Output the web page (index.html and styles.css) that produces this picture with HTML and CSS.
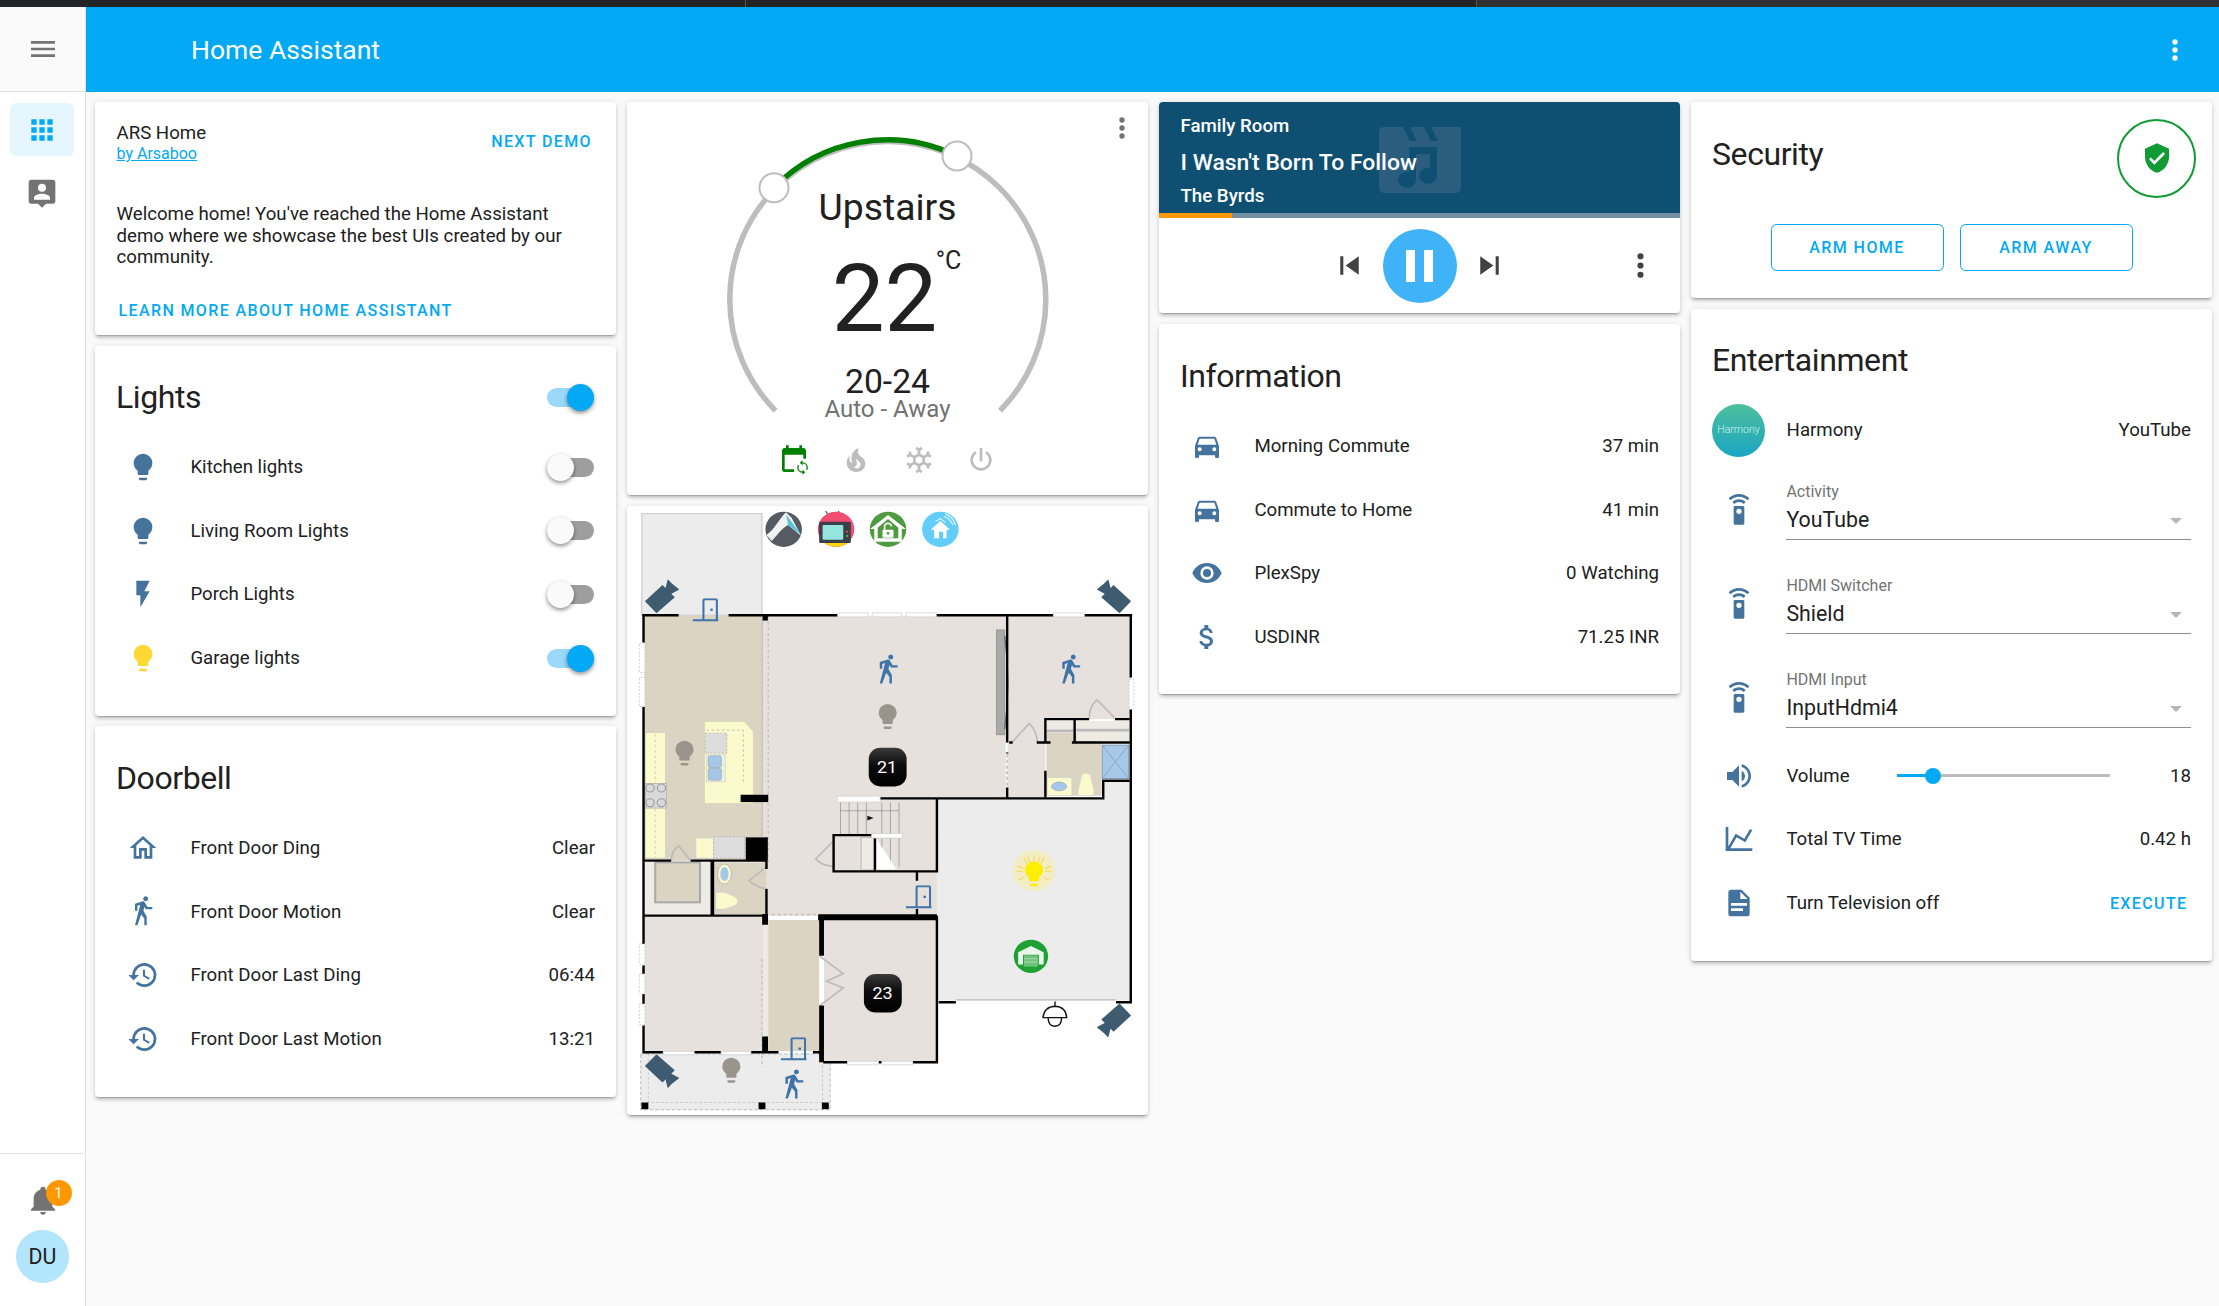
FILE: index.html
```html
<!DOCTYPE html>
<html lang="en">
<head>
<meta charset="utf-8">
<title>Home Assistant</title>
<link rel="stylesheet" href="styles.css">
</head>
<body>
<svg class="sprites" aria-hidden="true">
  <defs>
    <linearGradient id="nest-grad" x1="0" y1="0" x2="0" y2="1"><stop offset="0" stop-color="#3a3a3a"/><stop offset=".45" stop-color="#0c0c0c"/><stop offset="1" stop-color="#000"/></linearGradient>
  </defs>
  <symbol id="i-menu" viewBox="0 0 24 24"><path d="M3,6H21V8H3V6M3,11H21V13H3V11M3,16H21V18H3V16Z"/></symbol>
  <symbol id="i-apps" viewBox="0 0 24 24"><path d="M16,20H20V16H16M16,14H20V10H16M10,8H14V4H10M16,8H20V4H16M10,14H14V10H10M4,14H8V10H4M4,20H8V16H4M10,20H14V16H10M4,8H8V4H4V8Z"/></symbol>
  <symbol id="i-person" viewBox="0 0 24 24"><path fill-rule="evenodd" d="M4,2H20A2,2 0 0,1 22,4V18A2,2 0 0,1 20,20H15L12,23L9,20H4A2,2 0 0,1 2,18V4A2,2 0 0,1 4,2M12,5A3,3 0 0,0 9,8A3,3 0 0,0 12,11A3,3 0 0,0 15,8A3,3 0 0,0 12,5M6,17H18V15.5C18,13.5 14,12.5 12,12.5C10,12.5 6,13.5 6,15.5V17Z"/></symbol>
  <symbol id="i-dots" viewBox="0 0 24 24"><path d="M12,16A2,2 0 0,1 14,18A2,2 0 0,1 12,20A2,2 0 0,1 10,18A2,2 0 0,1 12,16M12,10A2,2 0 0,1 14,12A2,2 0 0,1 12,14A2,2 0 0,1 10,12A2,2 0 0,1 12,10M12,4A2,2 0 0,1 14,6A2,2 0 0,1 12,8A2,2 0 0,1 10,6A2,2 0 0,1 12,4Z"/></symbol>
  <symbol id="i-bell" viewBox="0 0 24 24"><path d="M21,19V20H3V19L5,17V11C5,7.9 7.03,5.17 10,4.29C10,4.19 10,4.1 10,4A2,2 0 0,1 12,2A2,2 0 0,1 14,4C14,4.1 14,4.19 14,4.29C16.97,5.17 19,7.9 19,11V17L21,19M14,21A2,2 0 0,1 12,23A2,2 0 0,1 10,21"/></symbol>
  <symbol id="i-bulb" viewBox="0 0 24 24"><path d="M12,2A7,7 0 0,0 5,9C5,11.38 6.19,13.47 8,14.74V17A1,1 0 0,0 9,18H15A1,1 0 0,0 16,17V14.74C17.81,13.47 19,11.38 19,9A7,7 0 0,0 12,2M9,21A1,1 0 0,0 10,22H14A1,1 0 0,0 15,21V20H9V21Z"/></symbol>
  <symbol id="i-flash" viewBox="0 0 24 24"><path d="M7,2V13H10V22L17,10H13L17,2H7Z"/></symbol>
  <symbol id="i-home" viewBox="0 0 24 24"><path d="M12 5.69L17 10.19V18H15V12H9V18H7V10.19L12 5.69M12 3L2 12H5V20H11V14H13V20H19V12H22L12 3Z"/></symbol>
  <symbol id="i-walk" viewBox="0 0 24 24"><path d="M14.12,10H19V8.2H15.38L13.38,4.87C13.08,4.37 12.54,4.03 11.92,4.03C11.74,4.03 11.58,4.06 11.42,4.11L6,5.8V11H7.8V7.33L9.91,6.67L6,22H7.8L10.67,13.89L13,17V22H14.8V15.59L12.31,11.05L13.04,8.18M14,3.8C15,3.8 15.8,3 15.8,2C15.8,1 15,0.2 14,0.2C13,0.2 12.2,1 12.2,2C12.2,3 13,3.8 14,3.8Z"/></symbol>
  <symbol id="i-history" viewBox="0 0 24 24"><path d="M13.5,8H12V13L16.28,15.54L17,14.33L13.5,12.25V8M13,3A9,9 0 0,0 4,12H1L4.96,16.03L9,12H6A7,7 0 0,1 13,5A7,7 0 0,1 20,12A7,7 0 0,1 13,19C11.07,19 9.32,18.21 8.06,16.94L6.64,18.36C8.27,20 10.5,21 13,21A9,9 0 0,0 22,12A9,9 0 0,0 13,3"/></symbol>
  <symbol id="i-car" viewBox="0 0 24 24"><path d="M5,11L6.5,6.5H17.5L19,11M17.5,16A1.5,1.5 0 0,1 16,14.5A1.5,1.5 0 0,1 17.5,13A1.5,1.5 0 0,1 19,14.5A1.5,1.5 0 0,1 17.5,16M6.5,16A1.5,1.5 0 0,1 5,14.5A1.5,1.5 0 0,1 6.5,13A1.5,1.5 0 0,1 8,14.5A1.5,1.5 0 0,1 6.5,16M18.92,6C18.72,5.42 18.16,5 17.5,5H6.5C5.84,5 5.28,5.42 5.08,6L3,12V20A1,1 0 0,0 4,21H5A1,1 0 0,0 6,20V19H18V20A1,1 0 0,0 19,21H20A1,1 0 0,0 21,20V12L18.92,6Z"/></symbol>
  <symbol id="i-eye" viewBox="0 0 24 24"><path d="M12,9A3,3 0 0,0 9,12A3,3 0 0,0 12,15A3,3 0 0,0 15,12A3,3 0 0,0 12,9M12,17A5,5 0 0,1 7,12A5,5 0 0,1 12,7A5,5 0 0,1 17,12A5,5 0 0,1 12,17M12,4.5C7,4.5 2.73,7.61 1,12C2.73,16.39 7,19.5 12,19.5C17,19.5 21.27,16.39 23,12C21.27,7.61 17,4.5 12,4.5Z"/></symbol>
  <symbol id="i-usd" viewBox="0 0 24 24"><path d="M11.8,10.9C9.53,10.31 8.8,9.7 8.8,8.75C8.8,7.66 9.81,6.9 11.5,6.9C13.28,6.9 13.94,7.75 14,9H16.21C16.14,7.28 15.09,5.7 13,5.19V3H10V5.16C8.06,5.58 6.5,6.84 6.5,8.77C6.5,11.08 8.41,12.23 11.2,12.9C13.7,13.5 14.2,14.38 14.2,15.31C14.2,16 13.71,17.1 11.5,17.1C9.44,17.1 8.63,16.18 8.5,15H6.32C6.44,17.19 8.08,18.42 10,18.83V21H13V18.85C14.95,18.5 16.5,17.35 16.5,15.3C16.5,12.46 14.07,11.5 11.8,10.9Z"/></symbol>
  <symbol id="i-remote" viewBox="0 0 24 24"><path d="M12,0C8.96,0 6.21,1.23 4.22,3.22L5.63,4.63C7.26,3 9.5,2 12,2C14.5,2 16.74,3 18.36,4.64L19.77,3.23C17.79,1.23 15.04,0 12,0M7.05,6.05L8.46,7.46C9.37,6.56 10.62,6 12,6C13.38,6 14.63,6.56 15.54,7.46L16.95,6.05C15.68,4.78 13.93,4 12,4C10.07,4 8.32,4.78 7.05,6.05M12,15A2,2 0 0,1 10,13A2,2 0 0,1 12,11A2,2 0 0,1 14,13A2,2 0 0,1 12,15M15,9H9A1,1 0 0,0 8,10V22A1,1 0 0,0 9,23H15A1,1 0 0,0 16,22V10A1,1 0 0,0 15,9Z"/></symbol>
  <symbol id="i-volume" viewBox="0 0 24 24"><path d="M14,3.23V5.29C16.89,6.15 19,8.83 19,12C19,15.17 16.89,17.84 14,18.7V20.77C18,19.86 21,16.28 21,12C21,7.72 18,4.14 14,3.23M16.5,12C16.5,10.23 15.5,8.71 14,7.97V16C15.5,15.29 16.5,13.76 16.5,12M3,9V15H7L12,20V4L7,9H3Z"/></symbol>
  <symbol id="i-chart" viewBox="0 0 24 24"><path d="M16,11.78L20.24,4.45L21.97,5.45L16.74,14.5L10.23,10.75L5.46,19H22V21H2V3H4V17.54L9.5,8L16,11.78Z"/></symbol>
  <symbol id="i-file" viewBox="0 0 24 24"><path d="M13,9H18.5L13,3.5V9M6,2H14L20,8V20A2,2 0 0,1 18,22H6C4.89,22 4,21.1 4,20V4C4,2.89 4.89,2 6,2M15,18V16H6V18H15M18,14V12H6V14H18Z"/></symbol>
  <symbol id="i-shield" viewBox="0 0 24 24"><path d="M10,17L6,13L7.41,11.59L10,14.17L16.59,7.58L18,9M12,1L3,5V11C3,16.55 6.84,21.74 12,23C17.16,21.74 21,16.55 21,11V5L12,1Z"/></symbol>
  <symbol id="i-prev" viewBox="0 0 24 24"><path d="M6,18V6H8V18H6M9.5,12L18,6V18L9.5,12Z"/></symbol>
  <symbol id="i-next" viewBox="0 0 24 24"><path d="M16,18H18V6H16M6,18L14.5,12L6,6V18Z"/></symbol>
  <symbol id="i-power" viewBox="0 0 24 24"><path d="M16.56,5.44L15.11,6.89C16.84,7.94 18,9.83 18,12A6,6 0 0,1 12,18A6,6 0 0,1 6,12C6,9.83 7.16,7.94 8.88,6.88L7.44,5.44C5.36,6.88 4,9.28 4,12A8,8 0 0,0 12,20A8,8 0 0,0 20,12C20,9.28 18.64,6.88 16.56,5.44M13,3H11V13H13"/></symbol>
  <symbol id="i-fire" viewBox="0 0 24 24"><path d="M17.66 11.2C17.43 10.9 17.15 10.64 16.89 10.38C16.22 9.78 15.46 9.35 14.82 8.72C13.33 7.26 13 4.85 13.95 3C13 3.23 12.17 3.75 11.46 4.32C8.87 6.4 7.85 10.07 9.07 13.22C9.11 13.32 9.15 13.42 9.15 13.55C9.15 13.77 9 13.97 8.8 14.05C8.57 14.15 8.33 14.09 8.14 13.93C8.08 13.88 8.04 13.83 8 13.76C6.87 12.33 6.69 10.28 7.45 8.64C5.78 10 4.87 12.3 5 14.47C5.06 14.97 5.12 15.47 5.29 15.97C5.43 16.57 5.7 17.17 6 17.7C7.08 19.43 8.95 20.67 10.96 20.92C13.1 21.19 15.39 20.8 17.03 19.32C18.86 17.66 19.5 15 18.56 12.72L18.43 12.46C18.22 12 17.66 11.2 17.66 11.2M14.5 17.5C14.22 17.74 13.76 18 13.4 18.1C12.28 18.5 11.16 17.94 10.5 17.28C11.69 17 12.4 16.12 12.61 15.23C12.78 14.43 12.46 13.77 12.33 13C12.21 12.26 12.23 11.63 12.5 10.94C12.69 11.32 12.89 11.7 13.13 12C13.9 13 15.11 13.44 15.37 14.8C15.41 14.94 15.43 15.08 15.43 15.23C15.46 16.05 15.1 16.95 14.5 17.5H14.5Z"/></symbol>
  <symbol id="i-snow" viewBox="0 0 24 24"><path d="M20.79,13.95L18.46,14.57L16.46,13.44V10.56L18.46,9.43L20.79,10.05L21.31,8.12L19.54,7.65L20,5.88L18.07,5.36L17.45,7.69L15.45,8.82L13,7.38V5.12L14.71,3.41L13.29,2L12,3.29L10.71,2L9.29,3.41L11,5.12V7.38L8.5,8.82L6.5,7.69L5.92,5.36L4,5.88L4.47,7.65L2.7,8.12L3.22,10.05L5.55,9.43L7.55,10.56V13.45L5.55,14.58L3.22,13.96L2.7,15.89L4.47,16.36L4,18.12L5.93,18.64L6.55,16.31L8.55,15.18L11,16.62V18.88L9.29,20.59L10.71,22L12,20.71L13.29,22L14.7,20.59L13,18.88V16.62L15.5,15.17L17.5,16.3L18.12,18.63L20.05,18.11L19.58,16.34L21.35,15.87L20.79,13.95M9.5,10.56L12,9.11L14.5,10.56V13.44L12,14.89L9.5,13.44V10.56Z"/></symbol>
  <symbol id="i-calsync" viewBox="0 0 24 24"><path d="M19,3H18V1H16V3H8V1H6V3H5C3.9,3 3,3.9 3,5V19A2,2 0 0,0 5,21H12V19H5V8H19V11H21V5C21,3.9 20.1,3 19,3Z"/><path transform="translate(12.4 11.6) scale(.5)" d="M12,18A6,6 0 0,1 6,12C6,11 6.25,10.03 6.7,9.2L5.24,7.74C4.46,8.97 4,10.43 4,12A8,8 0 0,0 12,20V23L16,19L12,15M12,4V1L8,5L12,9V6A6,6 0 0,1 18,12C18,13 17.75,13.97 17.3,14.8L18.76,16.26C19.54,15.03 20,13.57 20,12A8,8 0 0,0 12,4Z"/></symbol>
  <symbol id="i-camera" viewBox="0 0 100 100"><path d="M2,65L52,17L87,53L35,100Z"/><path d="M60,28L67,0L78,12L100,30L75,44Z"/></symbol>
  <symbol id="i-door" viewBox="0 0 80 72"><path fill="none" stroke="currentColor" stroke-width="6" d="M2,66H76M33,64V6Q33,3 36,3H69Q72,3 72,6V64"/><rect x="53" y="31" width="7" height="7"/></symbol>
</svg>

<div class="topstrip"><span class="seg-a"></span><span class="seg-b"></span><span class="seg-c"></span></div>
<div class="app">
  <aside class="sidebar">
    <div class="side-head"><svg class="ico side-ico"><use href="#i-menu"/></svg></div>
    <nav class="side-nav">
      <div class="side-item active"><svg class="ico blue-ico"><use href="#i-apps"/></svg></div>
      <div class="side-item"><svg class="ico side-ico"><use href="#i-person"/></svg></div>
    </nav>
    <div class="side-foot">
      <div class="bell-wrap"><svg class="ico side-ico"><use href="#i-bell"/></svg><span class="badge">1</span></div>
      <div class="avatar">DU</div>
    </div>
  </aside>

  <div class="main">
    <header class="topbar">
      <div class="topbar-title">Home Assistant</div>
      <svg class="ico white-ico"><use href="#i-dots"/></svg>
    </header>

    <div class="columns">
      <div class="column">
        <section class="card demo">
          <div class="demo-head">
            <div>
              <div class="demo-name">ARS Home</div>
              <a class="demo-by">by Arsaboo</a>
            </div>
            <span class="btn-text next-demo">NEXT DEMO</span>
          </div>
          <p class="demo-copy">Welcome home! You've reached the Home Assistant demo where we showcase the best UIs created by our community.</p>
          <div class="btn-text learn">LEARN MORE ABOUT HOME ASSISTANT</div>
        </section>

        <section class="card entities">
          <div class="card-head"><h2>Lights</h2><span class="toggle on"></span></div>
          <div class="row"><svg class="ico state"><use href="#i-bulb"/></svg><span class="name">Kitchen lights</span><span class="toggle"></span></div>
          <div class="row"><svg class="ico state"><use href="#i-bulb"/></svg><span class="name">Living Room Lights</span><span class="toggle"></span></div>
          <div class="row"><svg class="ico state"><use href="#i-flash"/></svg><span class="name">Porch Lights</span><span class="toggle"></span></div>
          <div class="row"><svg class="ico state lit"><use href="#i-bulb"/></svg><span class="name">Garage lights</span><span class="toggle on"></span></div>
        </section>

        <section class="card entities">
          <div class="card-head"><h2>Doorbell</h2></div>
          <div class="row"><svg class="ico state"><use href="#i-home"/></svg><span class="name">Front Door Ding</span><span class="value">Clear</span></div>
          <div class="row"><svg class="ico state"><use href="#i-walk"/></svg><span class="name">Front Door Motion</span><span class="value">Clear</span></div>
          <div class="row"><svg class="ico state"><use href="#i-history"/></svg><span class="name">Front Door Last Ding</span><span class="value">06:44</span></div>
          <div class="row"><svg class="ico state"><use href="#i-history"/></svg><span class="name">Front Door Last Motion</span><span class="value">13:21</span></div>
        </section>
      </div>

      <div class="column">
        <section class="card thermostat">
          <svg class="ico thermo-more"><use href="#i-dots"/></svg>
          <svg class="dial" viewBox="0 0 521 393">
            <path class="dial-track" d="M148.6,308.7 A158,158 0 1,1 373,308.7"/>
            <path class="dial-active" d="M147,85.7 A158,158 0 0,1 330,54"/>
            <circle class="dial-handle" cx="147" cy="85.7" r="14.5"/>
            <circle class="dial-handle" cx="330" cy="54" r="14.5"/>
          </svg>
          <div class="thermo-text">
            <div class="thermo-name">Upstairs</div>
            <div class="thermo-temp">22<span class="thermo-unit">°C</span></div>
            <div class="thermo-range">20-24</div>
            <div class="thermo-mode">Auto - Away</div>
          </div>
          <div class="thermo-modes">
            <svg class="ico mode-on"><use href="#i-calsync"/></svg>
            <svg class="ico mode-off"><use href="#i-fire"/></svg>
            <svg class="ico mode-off"><use href="#i-snow"/></svg>
            <svg class="ico mode-off"><use href="#i-power"/></svg>
          </div>
        </section>

        <section class="card plan">
          <svg class="plan-svg" viewBox="20 15 1513 1830" preserveAspectRatio="none">
            <!-- yards & rooms -->
            <rect x="63" y="38" width="349" height="305" fill="#ececec" stroke="#c8c8c8" stroke-width="3"/>
            <rect x="920" y="895" width="562" height="605" fill="#ececec"/>
            <rect x="1400" y="840" width="80" height="60" fill="#ececec"/>
            <rect x="60" y="1660" width="550" height="168" fill="#ececec" stroke="#bbb" stroke-width="3" stroke-dasharray="10 6"/>
            <path d="M82,1660V1806H588V1660" fill="none" stroke="#c4c4c4" stroke-width="2.5" stroke-dasharray="8 6"/>
            <rect x="70" y="345" width="345" height="735" fill="#dcd4c3"/>
            <rect x="415" y="345" width="705" height="550" fill="#e6e1dc"/>
            <rect x="415" y="895" width="505" height="350" fill="#e6e1dc"/>
            <rect x="1125" y="345" width="358" height="310" fill="#e6e1dc"/>
            <rect x="1125" y="650" width="110" height="245" fill="#e6e1dc"/>
            <rect x="70" y="1248" width="345" height="404" fill="#e6e1dc"/>
            <rect x="415" y="1248" width="15" height="404" fill="#ede9e4"/>
            <rect x="430" y="1258" width="148" height="394" fill="#dcd4c3"/>
            <rect x="592" y="1258" width="328" height="424" fill="#e6e1dc"/>
            <rect x="275" y="1085" width="150" height="155" fill="#dcd4c3"/>
            <rect x="72" y="1085" width="192" height="155" fill="#eeeae4"/>
            <rect x="102" y="1085" width="130" height="120" fill="#dcd4c3" stroke="#aaa" stroke-width="6"/>
            <rect x="1238" y="695" width="160" height="190" fill="#dcd4c3"/>
            <rect x="1238" y="660" width="80" height="35" fill="#eeeae4"/>
            <rect x="1325" y="660" width="155" height="60" fill="#eeeae4"/>
            <path d="M1238,690H1316M1325,688H1478" stroke="#bbb" stroke-width="8" fill="none"/>
            <path d="M413,345V1085" stroke="#c9c4ba" stroke-width="4"/>
            <path d="M430,345V1085M412,1375V1700" stroke="#bdb8b2" stroke-width="3" stroke-dasharray="9 8" fill="none"/>
            <!-- fixtures -->
            <rect x="73" y="695" width="59" height="377" fill="#fafacd" stroke="#ccc" stroke-width="2"/>
            <path d="M102,700V1070" stroke="#bbb" stroke-width="2" stroke-dasharray="8 8"/>
            <rect x="73" y="848" width="62" height="74" fill="#d9d9d9" stroke="#aaa" stroke-width="2"/>
            <g fill="none" stroke="#999" stroke-width="3"><circle cx="87" cy="862" r="12"/><circle cx="120" cy="862" r="12"/><circle cx="87" cy="906" r="12"/><circle cx="120" cy="906" r="12"/></g>
            <path d="M245,662H360L387,692V908H245Z" fill="#fafacd" stroke="#d4d4b0" stroke-width="2"/>
            <path d="M250,688H358V850" fill="none" stroke="#bbb" stroke-width="2.5" stroke-dasharray="8 7"/>
            <rect x="247" y="697" width="63" height="60" fill="#ddd" stroke="#aaa" stroke-width="2" stroke-dasharray="6 5"/>
            <rect x="250" y="760" width="55" height="83" fill="#f0f0dc" stroke="#ccc" stroke-width="2"/>
            <rect x="256" y="765" width="38" height="35" rx="5" fill="#a5c8e8" stroke="#8fa6b8" stroke-width="2"/>
            <rect x="256" y="803" width="38" height="35" rx="5" fill="#a5c8e8" stroke="#8fa6b8" stroke-width="2"/>
            <rect x="220" y="1012" width="52" height="60" fill="#fafacd" stroke="#ccc" stroke-width="2"/>
            <rect x="272" y="1008" width="90" height="64" fill="#ddd" stroke="#aaa" stroke-width="2" stroke-dasharray="6 5"/>
            <rect x="365" y="1010" width="63" height="68" fill="#000"/>
            <rect x="350" y="882" width="80" height="22" fill="#000"/>
            <rect x="1093" y="387" width="24" height="315" fill="#aaa" stroke="#888" stroke-width="2"/>
            <path d="M1117,405Q1135,545 1117,685" fill="none" stroke="#666" stroke-width="4"/>
            <rect x="1400" y="733" width="77" height="100" fill="#a8c8e8" stroke="#7c9ab4" stroke-width="3"/>
            <path d="M1400,733L1477,833M1477,733L1400,833" stroke="#7c9ab4" stroke-width="2"/>
            <rect x="1240" y="830" width="72" height="55" fill="#fafacd" stroke="#ccc" stroke-width="2"/>
            <ellipse cx="1275" cy="857" rx="22" ry="13" fill="#a5c8e8" stroke="#8fa6b8" stroke-width="2"/>
            <path d="M1330,885C1328,860 1336,852 1338,832C1340,812 1366,812 1368,832C1370,852 1378,860 1376,885Z" fill="#fafacd" stroke="#ccc" stroke-width="2"/>
            <ellipse cx="303" cy="1120" rx="20" ry="30" fill="#fafacd" stroke="#aaa" stroke-width="2"/>
            <ellipse cx="303" cy="1120" rx="12" ry="21" fill="#a5c8e8"/>
            <path d="M278,1175H300C320,1182 342,1188 342,1202C342,1216 320,1220 300,1226H278Z" fill="#fafacd" stroke="#ccc" stroke-width="2"/>
            <!-- stairs -->
            <path d="M640,905V1000M665,905V1000M690,905V1000M715,905V1000M760,905V1100M785,905V1100M810,905V1100M640,930H810" stroke="#888" stroke-width="2" fill="none"/>
            <path d="M718,945L736,952L718,959Z" fill="#111"/>
            <rect x="700" y="1010" width="38" height="98" fill="#eeeae4" stroke="#bbb" stroke-width="3"/>
            <path d="M745,1015L802,1106H745Z" fill="#fff"/>
            <!-- door swings -->
            <g fill="none" stroke="#bbb" stroke-width="5">
              <path d="M1138,725L1188,668Q1210,690 1212,725"/>
              <path d="M1362,650Q1364,615 1385,597L1435,650"/>
              <path d="M148,1080Q150,1050 170,1035L205,1080"/>
              <path d="M428,1095L375,1140Q395,1160 428,1165"/>
              <path d="M620,1020L568,1075Q585,1095 620,1097"/>
              <path d="M580,1367L648,1419L600,1442L648,1462L580,1515"/>
            </g>
            <!-- walls -->
            <g fill="none" stroke="#000" stroke-width="7">
              <path d="M65,343H170M315,343H632M918,343H1258M1348,343H1487"/>
              <path d="M1483,340V530M1483,625V1508"/>
              <path d="M68,340V425M68,618V1330M68,1395V1420M68,1480V1510M68,1575V1658"/>
              <path d="M1124,345V725M1124,755V758M1124,860V892"/>
              <path d="M755,893H1403V840H1480"/>
              <path d="M920,893V1112H620V1003H735"/>
              <path d="M740,1008V1110"/>
              <path d="M862,1112V1140M862,1225V1245"/>
              <path d="M920,1245V1685H850M760,1685H750M660,1685H590"/>
              <path d="M68,1245H425"/>
              <path d="M68,1080H148M205,1080H425"/>
              <path d="M425,1010V1105M425,1165V1245"/>
              <path d="M68,1655H125M215,1655H293M380,1655H460M560,1655H592"/>
              <path d="M1235,890V810M1235,725V655H1362M1437,655H1480"/>
              <path d="M1320,655V725M1312,725H1480M1130,725H1140M1210,725H1250"/>
              <path d="M925,1505H975M1440,1505H1485"/>
            </g>
            <path d="M268,1080V1245" stroke="#000" stroke-width="11"/>
            <path d="M575,1250H920" stroke="#000" stroke-width="18"/>
            <path d="M585,1250V1365M585,1515V1685" stroke="#000" stroke-width="14"/>
            <path d="M421,1240V1272M421,1608V1655" stroke="#000" stroke-width="17"/>
            <rect x="414" y="345" width="15" height="14" fill="#000"/>
            <path d="M975,1498H1440" stroke="#bbb" stroke-width="4"/>
            <!-- windows -->
            <g fill="#fff" stroke="#c8c8c8" stroke-width="2">
              <rect x="632" y="336" width="88" height="12"/><rect x="732" y="336" width="86" height="12"/><rect x="830" y="336" width="88" height="12"/><rect x="1258" y="336" width="90" height="12"/>
              <rect x="125" y="1652" width="90" height="11"/><rect x="293" y="1652" width="87" height="11"/><rect x="660" y="1682" width="90" height="11"/><rect x="760" y="1682" width="90" height="11"/>
              <rect x="730" y="998" width="90" height="14"/><rect x="630" y="886" width="125" height="18"/>
            </g>
            <g fill="#fff" stroke="#bbb" stroke-width="2" stroke-dasharray="6 5">
              <rect x="56" y="428" width="16" height="87"/><rect x="56" y="530" width="16" height="87"/>
              <rect x="1478" y="535" width="14" height="90"/>
              <rect x="56" y="1330" width="16" height="62"/><rect x="56" y="1420" width="16" height="60"/><rect x="56" y="1510" width="16" height="62"/>
            </g>
            <path d="M1124,760V860M440,1242H568" stroke="#c9c4ba" stroke-width="5" stroke-dasharray="10 7" fill="none"/>
            <rect x="62" y="1806" width="20" height="20" fill="#000"/><rect x="402" y="1806" width="20" height="20" fill="#000"/><rect x="586" y="1806" width="20" height="20" fill="#000"/>
            <!-- door icons -->
            <g class="plan-blue">
              <use href="#i-door" x="209" y="292" width="80" height="72"/>
              <use href="#i-door" x="828" y="1154" width="80" height="72"/>
              <use href="#i-door" x="465" y="1610" width="80" height="72"/>
              <use href="#i-walk" x="730" y="460" width="96" height="96"/>
              <use href="#i-walk" x="1260" y="460" width="96" height="96"/>
              <use href="#i-walk" x="456" y="1706" width="96" height="96"/>
            </g>
            <!-- cameras -->
            <g fill="#3f5b70">
              <use href="#i-camera" x="70" y="235" width="102" height="102"/>
              <use href="#i-camera" transform="translate(2870 0) scale(-1 1)" x="1384" y="235" width="102" height="102"/>
              <use href="#i-camera" transform="translate(2870 3120) scale(-1 -1)" x="1384" y="1509" width="102" height="102"/>
              <use href="#i-camera" transform="translate(0 3424) scale(1 -1)" x="70" y="1661" width="102" height="102"/>
            </g>
            <!-- bulbs -->
            <g fill="#9a948c">
              <use href="#i-bulb" x="722" y="602" width="110" height="90"/>
              <use href="#i-bulb" x="132" y="712" width="110" height="90"/>
              <use href="#i-bulb" x="268" y="1664" width="110" height="90"/>
            </g>
            <circle cx="1202" cy="1110" r="62" fill="#fff27a" opacity=".35"/>
            <g stroke="#f7d84a" stroke-width="3">
              <path d="M1202,1064V1082M1172,1072L1182,1088M1232,1072L1222,1088M1154,1096L1170,1104M1250,1096L1234,1104M1152,1112H1170M1252,1112H1234M1158,1138L1172,1130M1246,1138L1232,1130M1220,1068L1214,1084M1184,1068L1190,1084"/>
            </g>
            <use href="#i-bulb" x="1152" y="1074" width="100" height="90" fill="#ffee00"/>
            <!-- nest -->
            <rect x="722" y="741" width="110" height="116" rx="34" fill="url(#nest-grad)"/>
            <text class="plan-temp" x="775" y="818">21</text>
            <rect x="708" y="1420" width="110" height="116" rx="34" fill="url(#nest-grad)"/>
            <text class="plan-temp" x="762" y="1495">23</text>
            <!-- garage -->
            <circle cx="1193" cy="1367" r="50" fill="#1fa136"/>
            <path d="M1156,1355L1193,1336L1230,1355V1392H1216V1362H1170V1392H1156Z" fill="#e9f6ea"/>
            <rect x="1173" y="1364" width="40" height="34" fill="#6fc27d"/>
            <path d="M1173,1374H1213M1173,1384H1213" stroke="#a9dcb1" stroke-width="3"/>
            <!-- dome -->
            <path d="M1263,1503V1516M1228,1551Q1232,1518 1263,1517Q1294,1518 1297,1551ZM1243,1553Q1244,1576 1262,1577Q1282,1576 1282,1553" fill="#fff" stroke="#111" stroke-width="4"/>
            <!-- device badges -->
            <circle cx="475" cy="85" r="53" fill="#565a62"/>
            <path d="M425,102C450,85 460,55 482,34L498,50L526,105L488,72C470,80 455,105 440,120Z" fill="#f2f2f2"/>
            <path d="M482,40L526,102L488,72Z" fill="#58c3d9"/>
            <path d="M597,30L615,62L636,30" fill="none" stroke="#333" stroke-width="3"/>
            <circle cx="627" cy="85" r="53" fill="#f34d70"/>
            <path d="M590,122H664A53,53 0 0,1 590,122Z" fill="#ffd600"/>
            <rect x="578" y="62" width="92" height="64" rx="4" fill="#3a3f4a"/>
            <rect x="588" y="72" width="60" height="44" rx="3" fill="#94e5de"/>
            <circle cx="659" cy="92" r="3" fill="#e53"/><circle cx="659" cy="105" r="3" fill="#5c5"/>
            <circle cx="778" cy="85" r="53" fill="#4e9b40"/>
            <path d="M778,42L830,84H818V122H738V84H726Z" fill="#fff"/>
            <path d="M778,54L808,80V112H748V80Z" fill="#4e9b40"/>
            <rect x="762" y="86" width="32" height="24" rx="3" fill="#fff"/>
            <path d="M768,86V78A10,10 0 0,1 788,76" fill="none" stroke="#fff" stroke-width="5"/>
            <circle cx="778" cy="97" r="4" fill="#4e9b40"/>
            <circle cx="930" cy="85" r="53" fill="#62cdfb"/>
            <path d="M930,60L902,86H912V112H926V92H938V112H948V86H958Z" fill="#fff"/>
            <path d="M916,62L930,52L944,64M940,46Q958,52 966,72M944,38Q966,46 974,72" fill="none" stroke="#eafaff" stroke-width="3"/>
          </svg>
        </section>
      </div>

      <div class="column">
        <section class="card media">
          <div class="media-top">
            <svg class="media-art" viewBox="0 0 82 66"><path fill-rule="evenodd" d="M0,5Q0,0 5,0H24L31,14H38L31,0H45L52,14H59L52,0H82V60Q82,66 76,66H6Q0,66 0,60ZM30,20H58V48A9,8 0 1,1 51,41V27H37V52A9,8 0 1,1 30,45Z"/></svg>
            <div class="media-room">Family Room</div>
            <div class="media-track">I Wasn't Born To Follow</div>
            <div class="media-artist">The Byrds</div>
          </div>
          <div class="media-progress"><span class="media-progress-fill"></span></div>
          <div class="media-ctrl">
            <svg class="ico dark-ico"><use href="#i-prev"/></svg>
            <div class="pause"><span></span><span></span></div>
            <svg class="ico dark-ico"><use href="#i-next"/></svg>
            <svg class="ico dark-ico media-more"><use href="#i-dots"/></svg>
          </div>
        </section>

        <section class="card entities info">
          <div class="card-head"><h2>Information</h2></div>
          <div class="row"><svg class="ico state"><use href="#i-car"/></svg><span class="name">Morning Commute</span><span class="value">37 min</span></div>
          <div class="row"><svg class="ico state"><use href="#i-car"/></svg><span class="name">Commute to Home</span><span class="value">41 min</span></div>
          <div class="row"><svg class="ico state"><use href="#i-eye"/></svg><span class="name">PlexSpy</span><span class="value">0 Watching</span></div>
          <div class="row"><svg class="ico state"><use href="#i-usd"/></svg><span class="name">USDINR</span><span class="value">71.25 INR</span></div>
        </section>
      </div>

      <div class="column">
        <section class="card security">
          <div class="security-head">
            <h2>Security</h2>
            <div class="alarm"><svg class="ico alarm-ico"><use href="#i-shield"/></svg></div>
          </div>
          <div class="security-btns">
            <span class="btn-outline">ARM HOME</span>
            <span class="btn-outline">ARM AWAY</span>
          </div>
        </section>

        <section class="card entities">
          <div class="card-head"><h2>Entertainment</h2></div>
          <div class="row"><span class="harmony"><span>Harmony</span></span><span class="name">Harmony</span><span class="value">YouTube</span></div>
          <div class="select-row"><svg class="ico state"><use href="#i-remote"/></svg>
            <div class="select"><div class="select-label">Activity</div><div class="select-value">YouTube</div><span class="caret"></span></div></div>
          <div class="select-row"><svg class="ico state"><use href="#i-remote"/></svg>
            <div class="select"><div class="select-label">HDMI Switcher</div><div class="select-value">Shield</div><span class="caret"></span></div></div>
          <div class="select-row"><svg class="ico state"><use href="#i-remote"/></svg>
            <div class="select"><div class="select-label">HDMI Input</div><div class="select-value">InputHdmi4</div><span class="caret"></span></div></div>
          <div class="row"><svg class="ico state"><use href="#i-volume"/></svg><span class="name vol-name">Volume</span>
            <span class="slider"><span class="slider-fill"></span><span class="slider-knob"></span></span><span class="value">18</span></div>
          <div class="row"><svg class="ico state"><use href="#i-chart"/></svg><span class="name">Total TV Time</span><span class="value">0.42 h</span></div>
          <div class="row"><svg class="ico state"><use href="#i-file"/></svg><span class="name">Turn Television off</span><span class="btn-text execute">EXECUTE</span></div>
        </section>
      </div>
    </div>
  </div>
</div>
</body>
</html>
```
FILE: styles.css
```css
* { box-sizing: border-box; }
html, body { margin: 0; height: 100%; overflow: hidden; }
body { font-family: Roboto, "Liberation Sans", sans-serif; color: #212121; background: #fafafa; display: flex; flex-direction: column; }
.sprites { width: 0; height: 0; position: absolute; }
.ico { width: 32px; height: 32px; fill: currentColor; flex: none; display: block; }

.topstrip { height: 7px; display: flex; background: #222426; flex: none; }
.seg-a { width: 745px; }
.seg-b { width: 731px; border-left: 1px solid #555; }
.seg-c { flex: 1; background: #2f3133; border-left: 1px solid #555; }

.app { flex: 1; display: flex; min-height: 0; }

.sidebar { width: 86px; flex: none; background: #fff; border-right: 1px solid #e2e2e2; display: flex; flex-direction: column; }
.side-ico { color: #737373; }
.blue-ico { color: #03a9f4; }
.white-ico { color: #fff; }
.side-head { height: 85px; flex: none; display: flex; align-items: center; justify-content: center; background: #fafafa; border-bottom: 1px solid #e2e2e2; }
.side-nav { flex: 1; padding: 11px 11px 0 10px; display: flex; flex-direction: column; gap: 10px; }
.side-item { height: 53px; border-radius: 6px; display: flex; align-items: center; justify-content: center; }
.side-item.active { background: #e6f6fe; }
.side-foot { height: 153px; flex: none; border-top: 1px solid #e2e2e2; display: flex; flex-direction: column; align-items: center; padding-top: 30px; gap: 14px; }
.bell-wrap { position: relative; }
.badge { position: absolute; left: 19px; top: -4px; width: 26px; height: 26px; border-radius: 50%; background: #ff9800; color: #fff; font-size: 14px; display: flex; align-items: center; justify-content: center; }
.avatar { width: 53px; height: 53px; border-radius: 50%; background: #b3e5fc; display: flex; align-items: center; justify-content: center; font-size: 21.33px; }

.main { flex: 1; min-width: 0; display: flex; flex-direction: column; }
.topbar { height: 85px; flex: none; background: #03a9f4; color: #fff; display: flex; align-items: center; justify-content: space-between; padding: 0 28px 0 105px; }
.topbar-title { font-size: 26.5px; }

.columns { flex: 1; display: flex; gap: 11px; padding: 10px 7px 0 9px; align-items: flex-start; }
.column { width: 521px; flex: none; display: flex; flex-direction: column; gap: 10.5px; }

.card { background: #fff; border-radius: 4px; box-shadow: 0 3px 3px rgba(0,0,0,.14), 0 1px 7px rgba(0,0,0,.12), 0 3px 1px -2px rgba(0,0,0,.2); }

.btn-text { font-weight: 500; font-size: 16px; letter-spacing: 1.38px; color: #03a9f4; white-space: nowrap; }

.demo { height: 233px; padding: 21px 24px 0 21.5px; display: flex; flex-direction: column; }
.demo-head { display: flex; justify-content: space-between; align-items: center; height: 40px; }
.demo-name { font-size: 18.67px; line-height: 21px; }
.demo-by { display: block; font-size: 16px; line-height: 19px; color: #03a9f4; text-decoration: underline; }
.next-demo { position: relative; top: -2px; }
.demo-copy { margin: 41px 0 0; font-size: 18.67px; line-height: 21.5px; width: 470px; }
.learn { margin: 32px 0 0 2px; }

.entities { padding: 0 21px 26px 22px; }
.card-head { height: 90px; padding-top: 14px; display: flex; align-items: center; justify-content: space-between; }
.info .card-head { height: 91px; }
.info { padding-bottom: 25px; }
h2 { margin: 0 0 0 -1px; font-weight: 400; font-size: 32px; letter-spacing: -.42px; line-height: 45px; }
.row { height: 63.6px; display: flex; align-items: center; font-size: 18.67px; }
.state { color: #44739e; margin-left: 10px; margin-right: 31.4px; }
.state.lit { color: #fdd835; }
.name { flex: 1; white-space: nowrap; }
.value { white-space: nowrap; }

.toggle { width: 47px; height: 19px; border-radius: 10px; background: #9e9e9e; position: relative; flex: none; margin-right: 1px; }
.toggle::after { content: ""; position: absolute; width: 27px; height: 27px; border-radius: 50%; left: 0; top: -4px; background: #fafafa; box-shadow: 0 2px 4px rgba(0,0,0,.45); }
.toggle.on { background: #9ad9f9; }
.toggle.on::after { left: 20px; background: #03a9f4; }

.thermostat { height: 393px; position: relative; display: flex; flex-direction: column; justify-content: flex-end; }
.dial { position: absolute; inset: 0; width: 521px; height: 393px; }
.dial-track { fill: none; stroke: #bdbdbd; stroke-width: 5.5; }
.dial-active { fill: none; stroke: #008000; stroke-width: 5.5; }
.dial-handle { fill: #fff; stroke: #bdbdbd; stroke-width: 2; }
.thermo-more { position: absolute; right: 10px; top: 10px; color: #737373; }
.thermo-text { position: absolute; left: 0; right: 0; top: 0; display: flex; flex-direction: column; align-items: center; }
.thermo-name { font-size: 37.3px; line-height: 40px; margin-top: 85px; }
.thermo-temp { font-size: 94px; line-height: 100px; margin-top: 22px; margin-left: -6px; position: relative; }
.thermo-unit { font-size: 25px; line-height: 30px; position: absolute; left: 104px; top: -3px; }
.thermo-range { font-size: 33.7px; line-height: 30px; margin-top: 18px; }
.thermo-mode { font-size: 24px; line-height: 24px; margin-top: 0; color: #727272; }
.thermo-modes { height: 50px; margin-bottom: 10px; display: flex; justify-content: center; gap: 30.5px; align-items: center; }
.mode-on { color: #008000; }
.mode-off { color: #bdbdbd; }

.plan { height: 609.5px; overflow: hidden; }
.plan-svg { display: block; width: 521px; height: 609.5px; }
.plan-blue { fill: #3e74a8; color: #3e74a8; }
.plan-temp { font-family: Roboto, sans-serif; font-size: 52px; fill: #fff; text-anchor: middle; }

.media { height: 211px; overflow: hidden; }
.media-top { height: 111px; background: #0e4f72; color: #fff; position: relative; padding: 11px 21px 0 21.5px; font-weight: 500; }
.media-art { position: absolute; left: 220px; top: 24.7px; width: 82px; height: 66px; fill: #2b5d7e; }
.media-room, .media-track, .media-artist { position: relative; white-space: nowrap; }
.media-room { font-size: 18.67px; line-height: 27px; }
.media-track { font-size: 22.9px; line-height: 30px; margin-top: 8px; }
.media-artist { font-size: 18.67px; line-height: 27px; margin-top: 5px; }
.media-progress { height: 5px; background: #72909f; }
.media-progress-fill { display: block; height: 5px; width: 73px; background: #ff9800; }
.media-ctrl { height: 95px; position: relative; display: flex; align-items: center; justify-content: center; color: #424242; }
.dark-ico { width: 37px; height: 37px; }
.pause { width: 74px; height: 74px; border-radius: 50%; background: #40b2f7; margin: 0 14.5px; display: flex; align-items: center; justify-content: center; gap: 9px; }
.pause span { width: 8.6px; height: 32px; background: #fff; }
.media-more { position: absolute; right: 21px; top: 29px; }

.security { height: 196px; padding: 0 0 0 22px; display: flex; flex-direction: column; }
.security-head { height: 121.7px; display: flex; justify-content: space-between; padding-right: 16px; }
.security-head h2 { margin-top: 30px; }
.alarm { width: 79px; height: 79px; border-radius: 50%; border: 2.5px solid #119b35; margin-top: 16.5px; display: flex; align-items: center; justify-content: center; }
.alarm-ico { color: #119b35; }
.security-btns { display: flex; justify-content: center; gap: 16px; padding-right: 22px; }
.btn-outline { width: 173px; height: 47.4px; border: 1.4px solid #03a9f4; border-radius: 5.6px; display: flex; align-items: center; justify-content: center; color: #03a9f4; font-weight: 500; font-size: 16px; letter-spacing: 1.43px; }

.harmony { width: 53px; height: 53px; border-radius: 50%; margin-left: -1px; margin-right: 21.6px; flex: none; background: linear-gradient(#4dbf9b, #1aa5c4); color: #d4f2ee; font-size: 10.5px; font-weight: 300; display: flex; align-items: center; justify-content: center; }
.harmony span { margin-top: -1px; }
.select-row { height: 94px; display: flex; align-items: flex-start; padding-top: 32px; }
.select { flex: 1; position: relative; margin-top: -12px; height: 57.7px; border-bottom: 1.4px solid #8e8e8e; }
.select-label { font-size: 16px; line-height: 19px; color: #737373; }
.select-value { font-size: 21.33px; line-height: 28px; margin-top: 5px; }
.caret { position: absolute; right: 9px; top: 36px; width: 0; height: 0; border-left: 6px solid transparent; border-right: 6px solid transparent; border-top: 6.5px solid #b5b5b5; }
.vol-name { flex: none; width: 110.7px; }
.slider { width: 213px; height: 2.8px; background: #bdbdbd; position: relative; }
.slider-fill { position: absolute; left: 0; top: 0; height: 100%; width: 36px; background: #03a9f4; }
.slider-knob { position: absolute; left: 28px; top: -6.6px; width: 16px; height: 16px; border-radius: 50%; background: #03a9f4; }
.value:last-child { margin-left: auto; }
.execute { margin-right: 3.5px; }
```
